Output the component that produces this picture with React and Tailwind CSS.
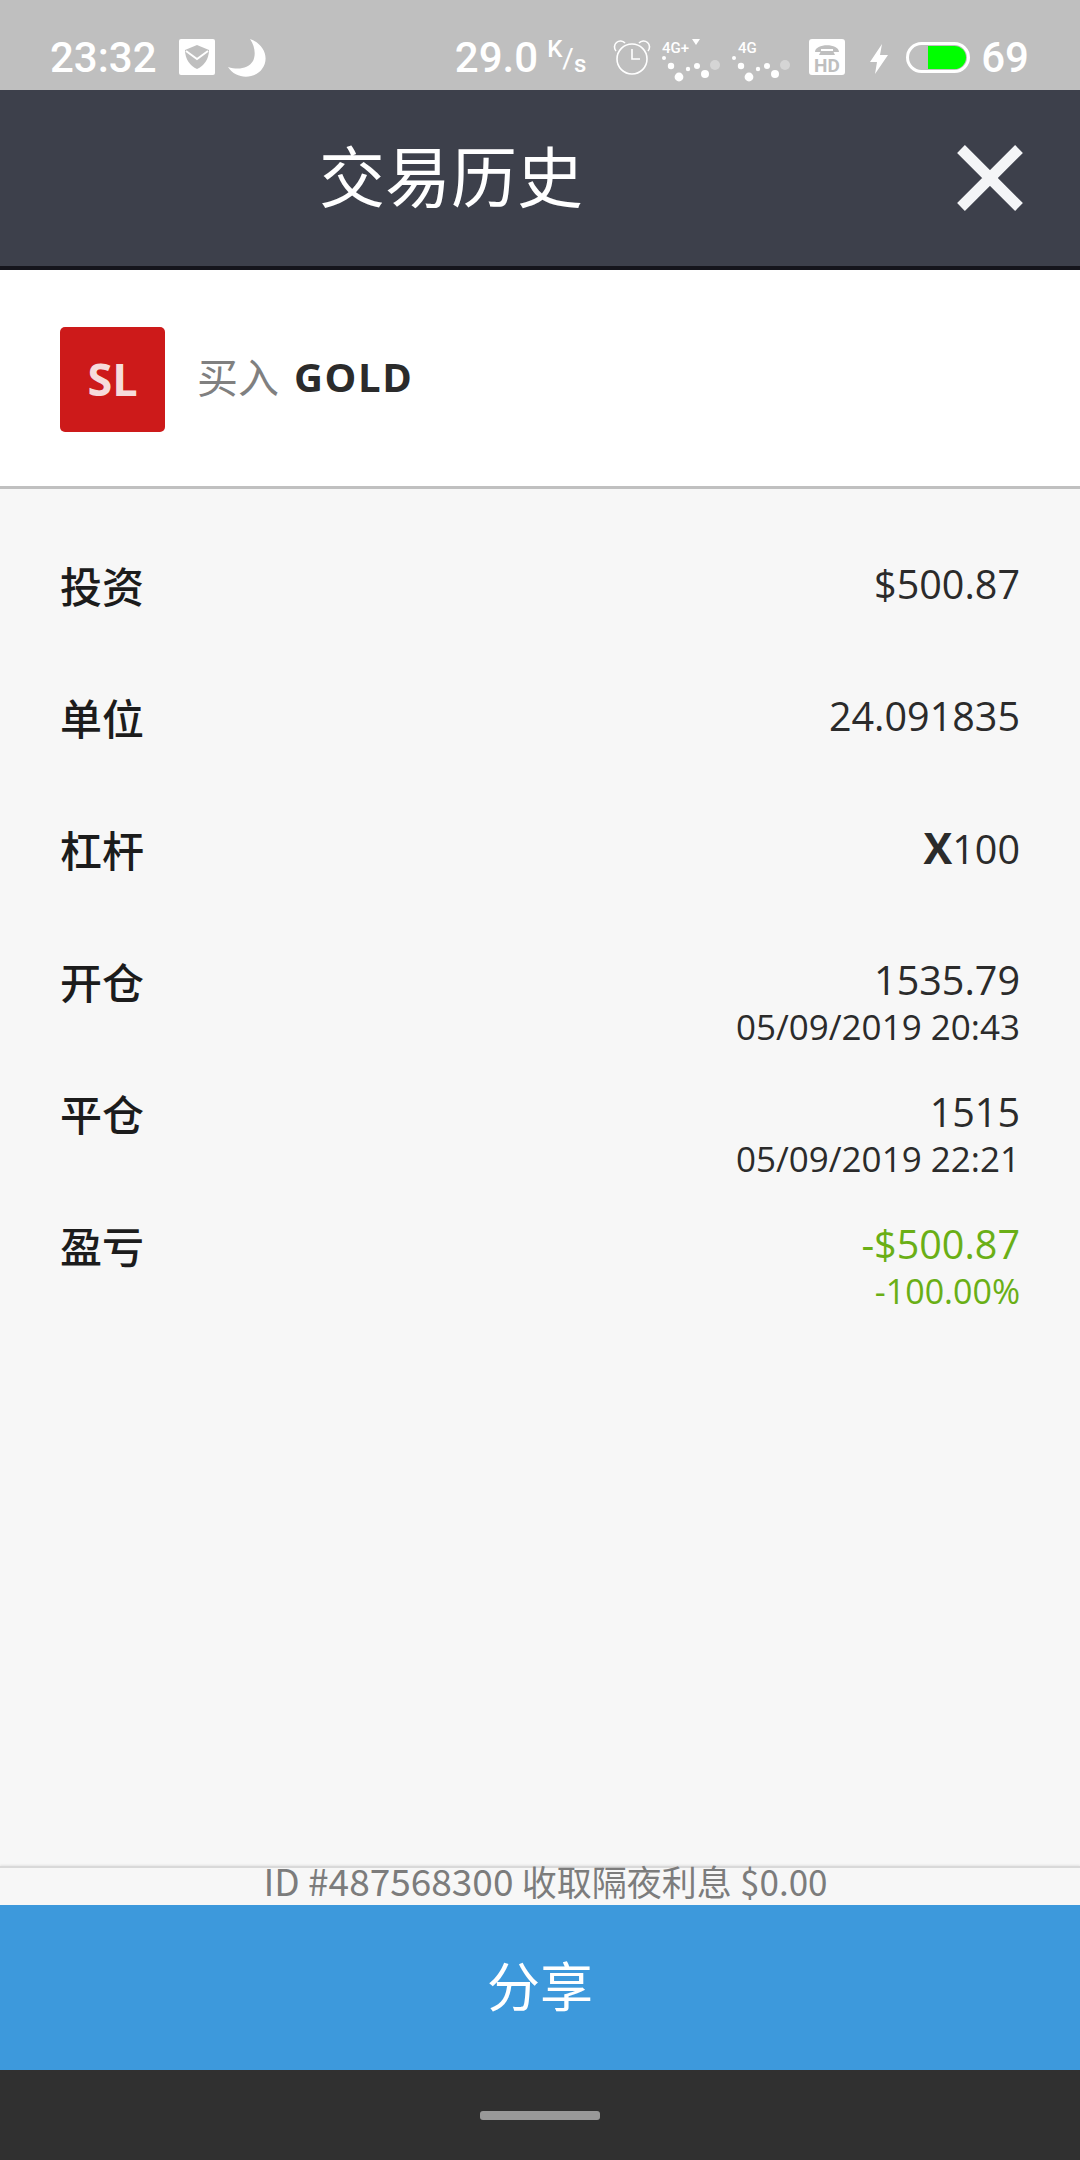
import React from "react";

const sans = "font-['Open_Sans','Noto_Sans_CJK_SC',sans-serif]";
const cjk = "font-['Noto_Sans_CJK_SC','Noto_Sans',sans-serif]";

function SignalDots({ label, plus }) {
  return (
    <svg width="60" height="46" viewBox="0 0 60 46" className="block">
      <text x={plus ? 0 : 6} y="15" fill="#fff" fontSize="15" fontWeight="500" fontFamily="Roboto, sans-serif">{label}</text>
      {plus && <path d="M30 1h8l-4 6z" fill="#fff" />}
      <circle cx="2" cy="20" r="2" fill="#fff" />
      <circle cx="9" cy="28" r="3.2" fill="#fff" />
      <circle cx="17" cy="39" r="4.4" fill="#fff" />
      <circle cx="26" cy="31" r="2.2" fill="#fff" />
      <circle cx="35" cy="28" r="3" fill="#fff" />
      <circle cx="43" cy="36" r="4" fill="#fff" />
      <circle cx="53" cy="27" r="5" fill="#fff" opacity="0.35" />
    </svg>
  );
}

function StatusBar() {
  return (
    <div className="h-[90px] bg-[#bfbfbf] flex items-start justify-between pl-[50px] pr-[51px] pt-[37px] text-white font-['Roboto',sans-serif] font-medium text-[42px] leading-[42px]">
      <div className="flex items-start">
        <span>23:32</span>
        <svg width="36" height="36" viewBox="0 0 36 36" className="ml-[22px] mt-[2px]">
          <rect width="36" height="36" rx="2" fill="#fff" />
          <path d="M6 11 18 6l12 5c0 9-5 16-12 19C11 27 6 20 6 11z" fill="#bfbfbf" />
          <path d="M7 12l11 8 11-8" fill="none" stroke="#fff" strokeWidth="2" />
        </svg>
        <svg width="38" height="38" viewBox="0 0 38 38" className="ml-[13px] mt-[2px]">
          <path d="M22 0c14 5 20 19 12 30C27 40 8 41 0 28c10 3 20 2 25-6 3-6 2-15-3-22z" fill="#fff" />
        </svg>
      </div>
      <div className="flex items-start">
        <span>29.0</span>
        <span className="ml-[9px] flex items-start text-[24px] leading-[24px] font-medium">
          <span>K</span>
          <span className="mt-[8px] text-[28px] leading-[28px] font-normal">/</span>
          <span className="mt-[15px] text-[24px] leading-[24px]">s</span>
        </span>
        <svg width="38" height="36" viewBox="0 0 38 36" fill="none" stroke="#fff" strokeWidth="1.6" className="ml-[27px] mt-[2px]">
          <circle cx="19" cy="20" r="15" />
          <path d="M19 10v10h8" />
          <path d="M3 12a6 6 0 0 1 9-8M35 12a6 6 0 0 0-9-8" />
        </svg>
        <span className="ml-[11px] mt-[1px]"><SignalDots label="4G+" plus /></span>
        <span className="ml-[10px] mt-[1px]"><SignalDots label="4G" /></span>
        <span className="ml-[17px] mt-[2px] w-[36px] h-[36px] rounded-[3px] bg-white block">
          <svg width="36" height="36" viewBox="0 0 36 36">
            <path d="M6 13c0-9 24-9 24 0h-6v-3H12v3z" fill="#bfbfbf" />
            <path d="M12 12h12l2 4H10z" fill="#bfbfbf" />
            <text x="18" y="33" textAnchor="middle" fill="#bfbfbf" fontSize="19" fontWeight="700" fontFamily="Roboto, sans-serif">HD</text>
          </svg>
        </span>
        <svg width="20" height="30" viewBox="0 0 20 30" className="ml-[24px] mt-[7px]">
          <path d="M13 0 1 18h7L6 30l13-19h-8z" fill="#fff" />
        </svg>
        <div className="ml-[17px] mt-[5px] w-[64px] h-[31px] rounded-full border-[3px] border-white p-[1px] overflow-hidden flex justify-end">
          <div className="w-[38px] h-full bg-[#00ff00] rounded-r-full" />
        </div>
        <span className="ml-[11px]">69</span>
      </div>
    </div>
  );
}

function Row({ label, value, sub, green }) {
  const color = green ? "text-[#6aaf16]" : "text-[#2b2b2b]";
  return (
    <div className="h-[132px] flex justify-between items-start">
      <div className={`${cjk} text-[42px] leading-[56px] font-medium text-[#1c1c1c]`}>{label}</div>
      <div className={`${sans} ${color} text-right`}>
        <div className="text-[39.5px] leading-[54px]">{value}</div>
        {sub && <div className={`${green ? "text-[34px]" : "text-[35px]"} leading-[40px]`}>{sub}</div>}
      </div>
    </div>
  );
}

export default function App() {
  return (
    <div className="w-[1080px] h-[2160px] flex flex-col bg-[#f7f7f7] overflow-hidden">
      <StatusBar />
      <div className="h-[180px] bg-[#3d404b] border-b-[4px] border-[#15151c] flex items-center justify-between pl-[319px] pr-[56px]">
        <div className={`${cjk} text-[66px] leading-[80px] text-white pb-[10px]`}>交易历史</div>
        <svg width="68" height="68" viewBox="0 0 68 68">
          <path d="M5 5 63 63M63 5 5 63" stroke="#f4f5f7" strokeWidth="11" />
        </svg>
      </div>
      <div className="h-[219px] bg-white border-b-[3px] border-[#c0c0c0] flex items-center pl-[60px] pt-[2px]">
        <div className={`${sans} w-[105px] h-[105px] rounded-[5px] bg-[#cd1a1a] flex items-center justify-center text-[#f6dcdc] text-[45px] font-bold`}>SL</div>
        <div className="ml-[32px] mb-[5px] flex items-center">
          <span className={`${cjk} text-[41px] text-[#808080] pb-[2px]`}>买入</span>
          <span className={`${sans} ml-[15px] text-[40px] font-bold tracking-[1.6px] text-[#2b2b2b]`}>GOLD</span>
        </div>
      </div>
      <div className="flex-1 px-[60px] pt-[68px]">
        <Row label="投资" value="$500.87" />
        <Row label="单位" value="24.091835" />
        <Row label="杠杆" value={<><span className="font-bold text-[43px]">X</span>100</>} />
        <Row label="开仓" value="1535.79" sub="05/09/2019 20:43" />
        <Row label="平仓" value="1515" sub="05/09/2019 22:21" />
        <Row label="盈亏" value="-$500.87" sub="-100.00%" green />
      </div>
      <div className={`${cjk} h-[39px] border-t-[2px] border-[#d9d9d9] pl-[11px] text-center text-[37px] leading-[24px] text-[#7c7c7c] shadow-[0_-1px_2px_rgba(0,0,0,0.08)]`}>
        ID #487568300 <span className="text-[35px]">收取隔夜利息</span> <span className="text-[35px]">$0.00</span>
      </div>
      <div className={`${cjk} h-[165px] bg-[#3d99dc] flex items-center justify-center text-[53px] text-white pb-[5px]`}>分享</div>
      <div className="h-[90px] bg-[#303030] flex items-center justify-center">
        <div className="w-[120px] h-[9px] rounded-[3px] bg-[#999999]" />
      </div>
    </div>
  );
}
